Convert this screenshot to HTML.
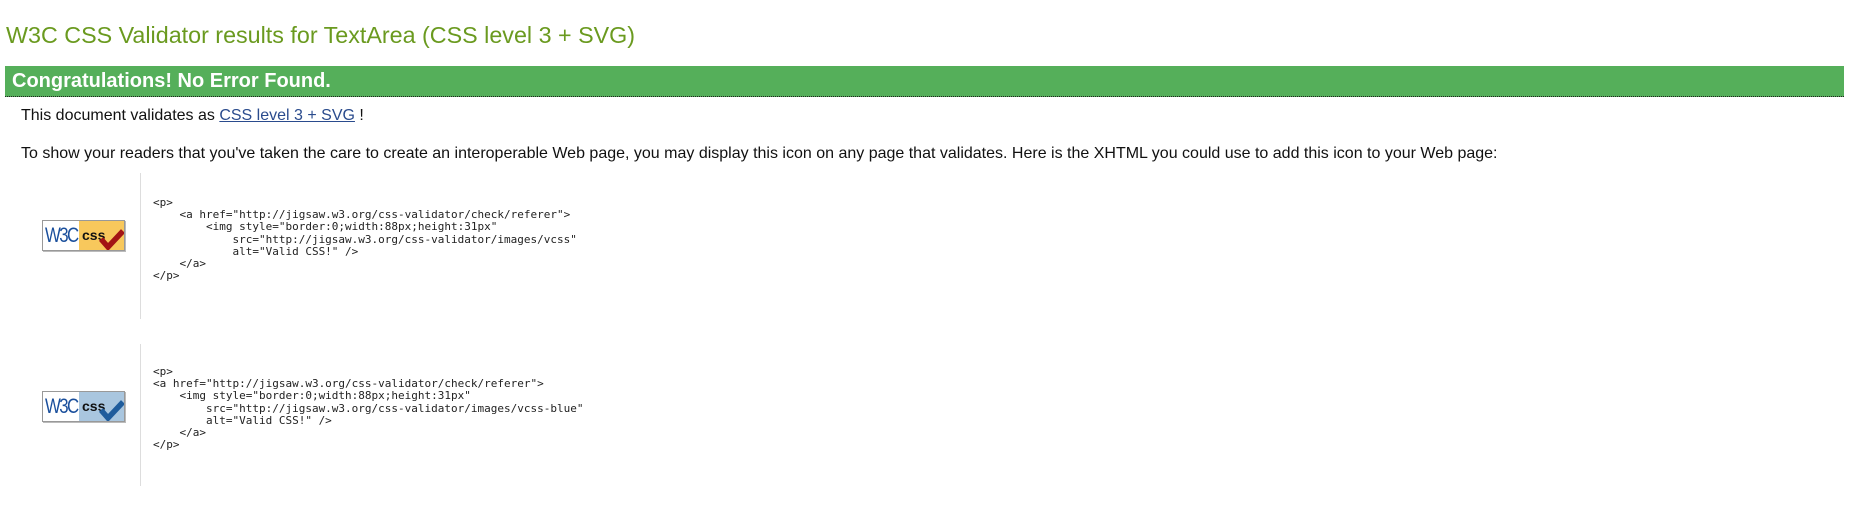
<!DOCTYPE html>
<html><head><meta charset="utf-8"><style>
body{margin:0;width:1862px;height:507px;background:#fff;position:relative;overflow:hidden;font-family:"Liberation Sans",Arial,sans-serif;}
.a{position:absolute;white-space:nowrap;}
h1{position:absolute;left:6px;top:20px;margin:0;font-weight:normal;font-size:23.3px;color:#6a9a1f;line-height:30px;white-space:nowrap;}
.bar{position:absolute;left:5px;top:66px;width:1839px;height:30px;background:#55af5a;border-bottom:1px dotted #222;}
.bar span{position:absolute;left:7px;top:4px;color:#fff;font-weight:bold;font-size:20px;line-height:22px;letter-spacing:0px;}
.t{font-size:16px;color:#111;line-height:18px;}
.t a{color:#2a4b8d;text-decoration:underline;}
pre{position:absolute;margin:0;font-family:"DejaVu Sans Mono",monospace;font-size:11px;line-height:12.2px;color:#222;}
.vl{position:absolute;left:140px;width:1px;background:#ddd;}
.badge{position:absolute;left:42px;width:81px;height:29px;border:1px solid #999;box-shadow:1px 1px 0 #bbb;overflow:hidden;}
.badge .w{position:absolute;left:0;top:0;width:36px;height:29px;background:#fff;}
.badge .w span{position:absolute;left:2px;top:3px;font-family:"Liberation Sans Narrow","Liberation Sans",sans-serif;font-size:21px;color:#1a4f9c;letter-spacing:-2px;transform:scaleX(0.8);transform-origin:left;}
.badge .c{position:absolute;left:36px;top:0;right:0;height:29px;}
.badge .c span{position:absolute;left:3px;top:6px;font-weight:bold;font-size:14px;color:#111;}
.badge svg{position:absolute;left:56px;top:6px;}
</style></head><body>
<h1>W3C CSS Validator results for TextArea (CSS level 3 + SVG)</h1>
<div class="bar"><span>Congratulations! No Error Found.</span></div>
<div class="a t" style="left:21px;top:107px">This document validates as <a>CSS level 3 + SVG</a> !</div>
<div class="a t" style="left:21px;top:145px">To show your readers that you've taken the care to create an interoperable Web page, you may display this icon on any page that validates. Here is the XHTML you could use to add this icon to your Web page:</div>

<div class="badge" style="top:220px"><div class="w"><span>W3C</span></div><div class="c" style="background:#f8c85c"><span>css</span></div>
<svg width="26" height="24" viewBox="0 0 26 24"><path d="M2 12 L9 20 L24 4" stroke="#a31414" stroke-width="5.5" fill="none"/></svg></div>
<div class="vl" style="top:173px;height:146px"></div>
<pre style="left:153px;top:197px">&lt;p&gt;
    &lt;a href="http://jigsaw.w3.org/css-validator/check/referer"&gt;
        &lt;img style="border:0;width:88px;height:31px"
            src="http://jigsaw.w3.org/css-validator/images/vcss"
            alt="Valid CSS!" /&gt;
    &lt;/a&gt;
&lt;/p&gt;</pre>

<div class="badge" style="top:391px"><div class="w"><span>W3C</span></div><div class="c" style="background:#a9c6df"><span>css</span></div>
<svg width="26" height="24" viewBox="0 0 26 24"><path d="M2 12 L9 20 L24 4" stroke="#1f5c9c" stroke-width="5.5" fill="none"/></svg></div>
<div class="vl" style="top:344px;height:142px"></div>
<pre style="left:153px;top:366px">&lt;p&gt;
&lt;a href="http://jigsaw.w3.org/css-validator/check/referer"&gt;
    &lt;img style="border:0;width:88px;height:31px"
        src="http://jigsaw.w3.org/css-validator/images/vcss-blue"
        alt="Valid CSS!" /&gt;
    &lt;/a&gt;
&lt;/p&gt;</pre>
</body></html>
